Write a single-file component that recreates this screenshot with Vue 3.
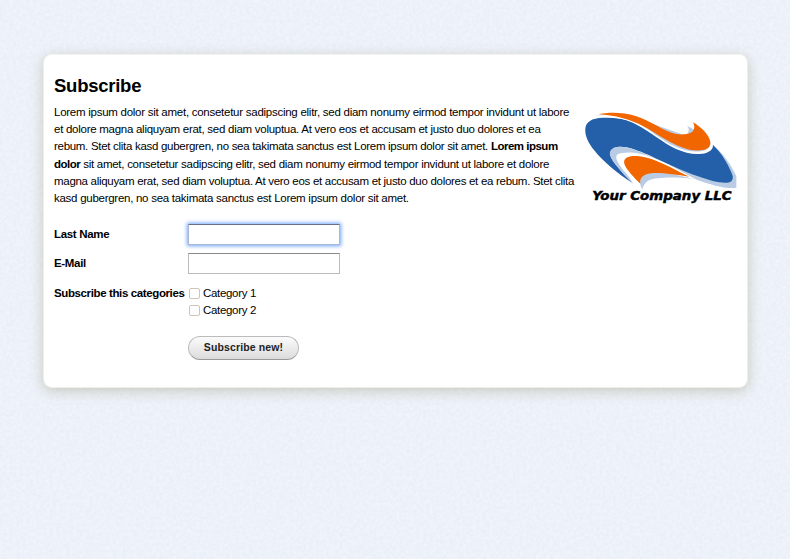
<script setup>
import { ref } from 'vue'

const lastName = ref('')
const email = ref('')
const categories = ref([
  { name: 'Category 1', on: false },
  { name: 'Category 2', on: false },
])
</script>

<template>
  <div class="page">
    <svg class="texture" width="790" height="559" aria-hidden="true">
      <filter id="paper" x="0" y="0" width="100%" height="100%" color-interpolation-filters="sRGB">
        <feTurbulence type="fractalNoise" baseFrequency="0.3" numOctaves="3" seed="4" />
        <feColorMatrix values="0.05 0 0 0 0.904  0.04 0 0 0 0.927  0.02 0 0 0 0.967  0 0 0 0 1" />
      </filter>
      <rect width="790" height="559" filter="url(#paper)" />
    </svg>
    <main class="card">
      <section class="intro">
        <div class="copy">
          <h1>Subscribe</h1>
          <p>
            <span class="loose">Lorem ipsum dolor sit amet, consetetur sadipscing elitr, sed diam nonumy eirmod tempor invidunt ut labore</span><br />
            et dolore magna aliquyam erat, sed diam voluptua. At vero eos et accusam et justo duo dolores et ea<br />
            <span class="snug">rebum. Stet clita kasd gubergren, no sea takimata sanctus est Lorem ipsum dolor sit amet.</span> <b>Lorem ipsum<br />
            dolor</b> sit amet, consetetur sadipscing elitr, sed diam nonumy eirmod tempor invidunt ut labore et dolore<br />
            <span class="snug">magna aliquyam erat, sed diam voluptua. At vero eos et accusam et justo duo dolores et ea rebum. Stet clita</span><br />
            kasd gubergren, no sea takimata sanctus est Lorem ipsum dolor sit amet.
          </p>
        </div>
        <svg class="logo" viewBox="0 0 495 315" width="165" height="105" role="img">
          <path fill="#b9cce4" d="M398 119C425 140 455 180 469 214L469 248C443 253 390 240 343 221L270 180Z" />
          <path fill="#2460a9" d="M16 80C14 57 26 43 57 39C94 36 127 40 158 50L290 110L398 119C425 143 447 181 458 212C462 236 438 237 398 228C357 217 316 201 272 181C218 157 153 121 113 126C86 130 84 151 105 176C121 196 141 218 157 234C112 204 72 173 42 135C27 116 17 97 16 80Z" />
          <path fill="#fff" d="M38 39C80 30 128 37 170 59C215 82 248 113 288 132C320 146 352 152 380 143C396 137 401 127 398 117L391 100L200 50L100 25Z" />
          <path fill="#b9cce4" d="M44 32C92 25 132 34 172 54C212 74 244 106 284 124C316 139 350 144 376 136C388 131 393 122 391 112L340 100L200 50L100 24Z" />
          <path fill="#f26600" d="M56 28C88 21 130 22 167 33C211 46 247 77 285 86C316 93 343 83 343 66C343 60 341 55 338 51C361 64 388 89 391 110C393 137 360 139 329 134C275 122 232 85 189 63C150 44 105 30 56 28Z" />
          <path fill="#b9cce4" d="M321 62L339 72C341 78 337 82 330 84L321 86C329 78 327 69 321 62Z" />
          <path fill="#fff" d="M190 258C154 232 119 183 102 160C90 135 144 128 183 146C241 166 298 196 345 222C280 211 225 205 207 216C194 225 194 242 196 258Z" />
          <path fill="#b9cce4" d="M160 237C143 220 104 182 91 154C83 130 108 121 139 127C163 132 194 145 222 160C181 140 132 138 113 148C99 158 124 188 138 205C148 217 155 228 160 237Z" />
          <path fill="#b9cce4" d="M188 254C175 235 177 212 200 203C229 194 284 209 338 221C282 215 229 216 207 226C193 234 188 246 188 254Z" />
          <path fill="#f26600" d="M181 236C164 219 139 195 133 176C128 158 149 151 177 154C226 159 279 193 328 215C278 208 229 200 202 207C184 213 179 223 181 236Z" />
          <text x="37" y="285" textLength="418" lengthAdjust="spacingAndGlyphs">Your Company LLC</text>
        </svg>
      </section>

      <form class="form" @submit.prevent>
        <div class="row">
          <label for="last-name">Last Name</label>
          <input id="last-name" v-model="lastName" class="field focused" type="text" />
        </div>
        <div class="row">
          <label for="email">E-Mail</label>
          <input id="email" v-model="email" class="field" type="text" />
        </div>
        <div class="row options">
          <span class="caption">Subscribe this categories</span>
          <div>
            <label v-for="c in categories" :key="c.name" class="option">
              <input v-model="c.on" type="checkbox" />{{ c.name }}
            </label>
          </div>
        </div>
        <button type="submit">Subscribe new!</button>
      </form>
    </main>
  </div>
</template>

<style>
body {
  margin: 0;
  overflow: hidden;
}
</style>

<style scoped>
.page {
  display: grid;
  width: 790px;
  height: 559px;
  background: #edf1f9;
  font-family: "Liberation Sans", Arial, sans-serif;
  font-size: 11.5px;
  letter-spacing: -0.27px;
  color: #000;
}
.texture,
.card {
  grid-area: 1 / 1;
}
.texture {
  display: block;
}
.card {
  z-index: 1;
  box-sizing: border-box;
  width: 705px;
  height: 334px;
  margin: 54px 0 0 43px;
  padding: 0 10px;
  border-radius: 9px;
  border: 1px solid #eeeeeb;
  border-top-color: #f3f3f1;
  background: #fff;
  box-shadow: 0 3px 13px rgba(130, 130, 85, 0.36);
}
.intro {
  display: flex;
  height: 168px;
}
.copy {
  flex: none;
  width: 526px;
}
h1 {
  margin: 19px 0 6px;
  font-size: 18.5px;
  line-height: 24px;
  letter-spacing: -0.25px;
}
p {
  margin: 0;
  line-height: 17.2px;
  white-space: nowrap;
}
.loose {
  letter-spacing: -0.262px;
}
.snug {
  letter-spacing: -0.295px;
}
b {
  letter-spacing: -0.5px;
}
.logo {
  flex: none;
  margin-top: 50px;
}
.logo text {
  font: italic bold 37px "DejaVu Sans", sans-serif;
  letter-spacing: 0;
  stroke: #000;
  stroke-width: 1.4px;
}
.form {
  display: flex;
  flex-direction: column;
}
.row {
  display: flex;
  height: 29px;
}
.row > label,
.caption {
  flex: none;
  width: 134px;
  font-weight: bold;
  line-height: 22px;
  letter-spacing: -0.32px;
  white-space: nowrap;
}
.row > .caption {
  line-height: 19px;
  letter-spacing: -0.38px;
}
.field {
  box-sizing: border-box;
  width: 152px;
  height: 21px;
  margin: 1px 0 0;
  padding: 1px 3px;
  border: 1px solid #bbb;
  border-top-color: #888;
  background: #fff;
  outline: none;
}
.focused {
  border-color: #a8b8d4;
  border-top-color: #66708a;
  box-shadow: 0 0 4px 1px #6ea4fb;
}
.options {
  height: 53px;
  padding-top: 3px;
}
.option {
  display: flex;
  align-items: center;
  height: 17px;
  letter-spacing: -0.32px;
}
.option input {
  appearance: none;
  box-sizing: border-box;
  width: 11px;
  height: 11px;
  margin: 2px 3px 0 1px;
  border: 1px solid #cec5b5;
  border-radius: 2px;
  background: #fff;
}
button {
  box-sizing: border-box;
  width: 111px;
  height: 24px;
  margin: -1px 0 0 134px;
  padding: 0 0 2px;
  border: 1px solid #bbb;
  border-bottom-color: #999;
  border-radius: 12px;
  background: linear-gradient(#fbfbfb, #dcdcdc);
  font: bold 10.5px "Liberation Sans", Arial, sans-serif;
  letter-spacing: 0.12px;
  color: #222;
}
</style>
